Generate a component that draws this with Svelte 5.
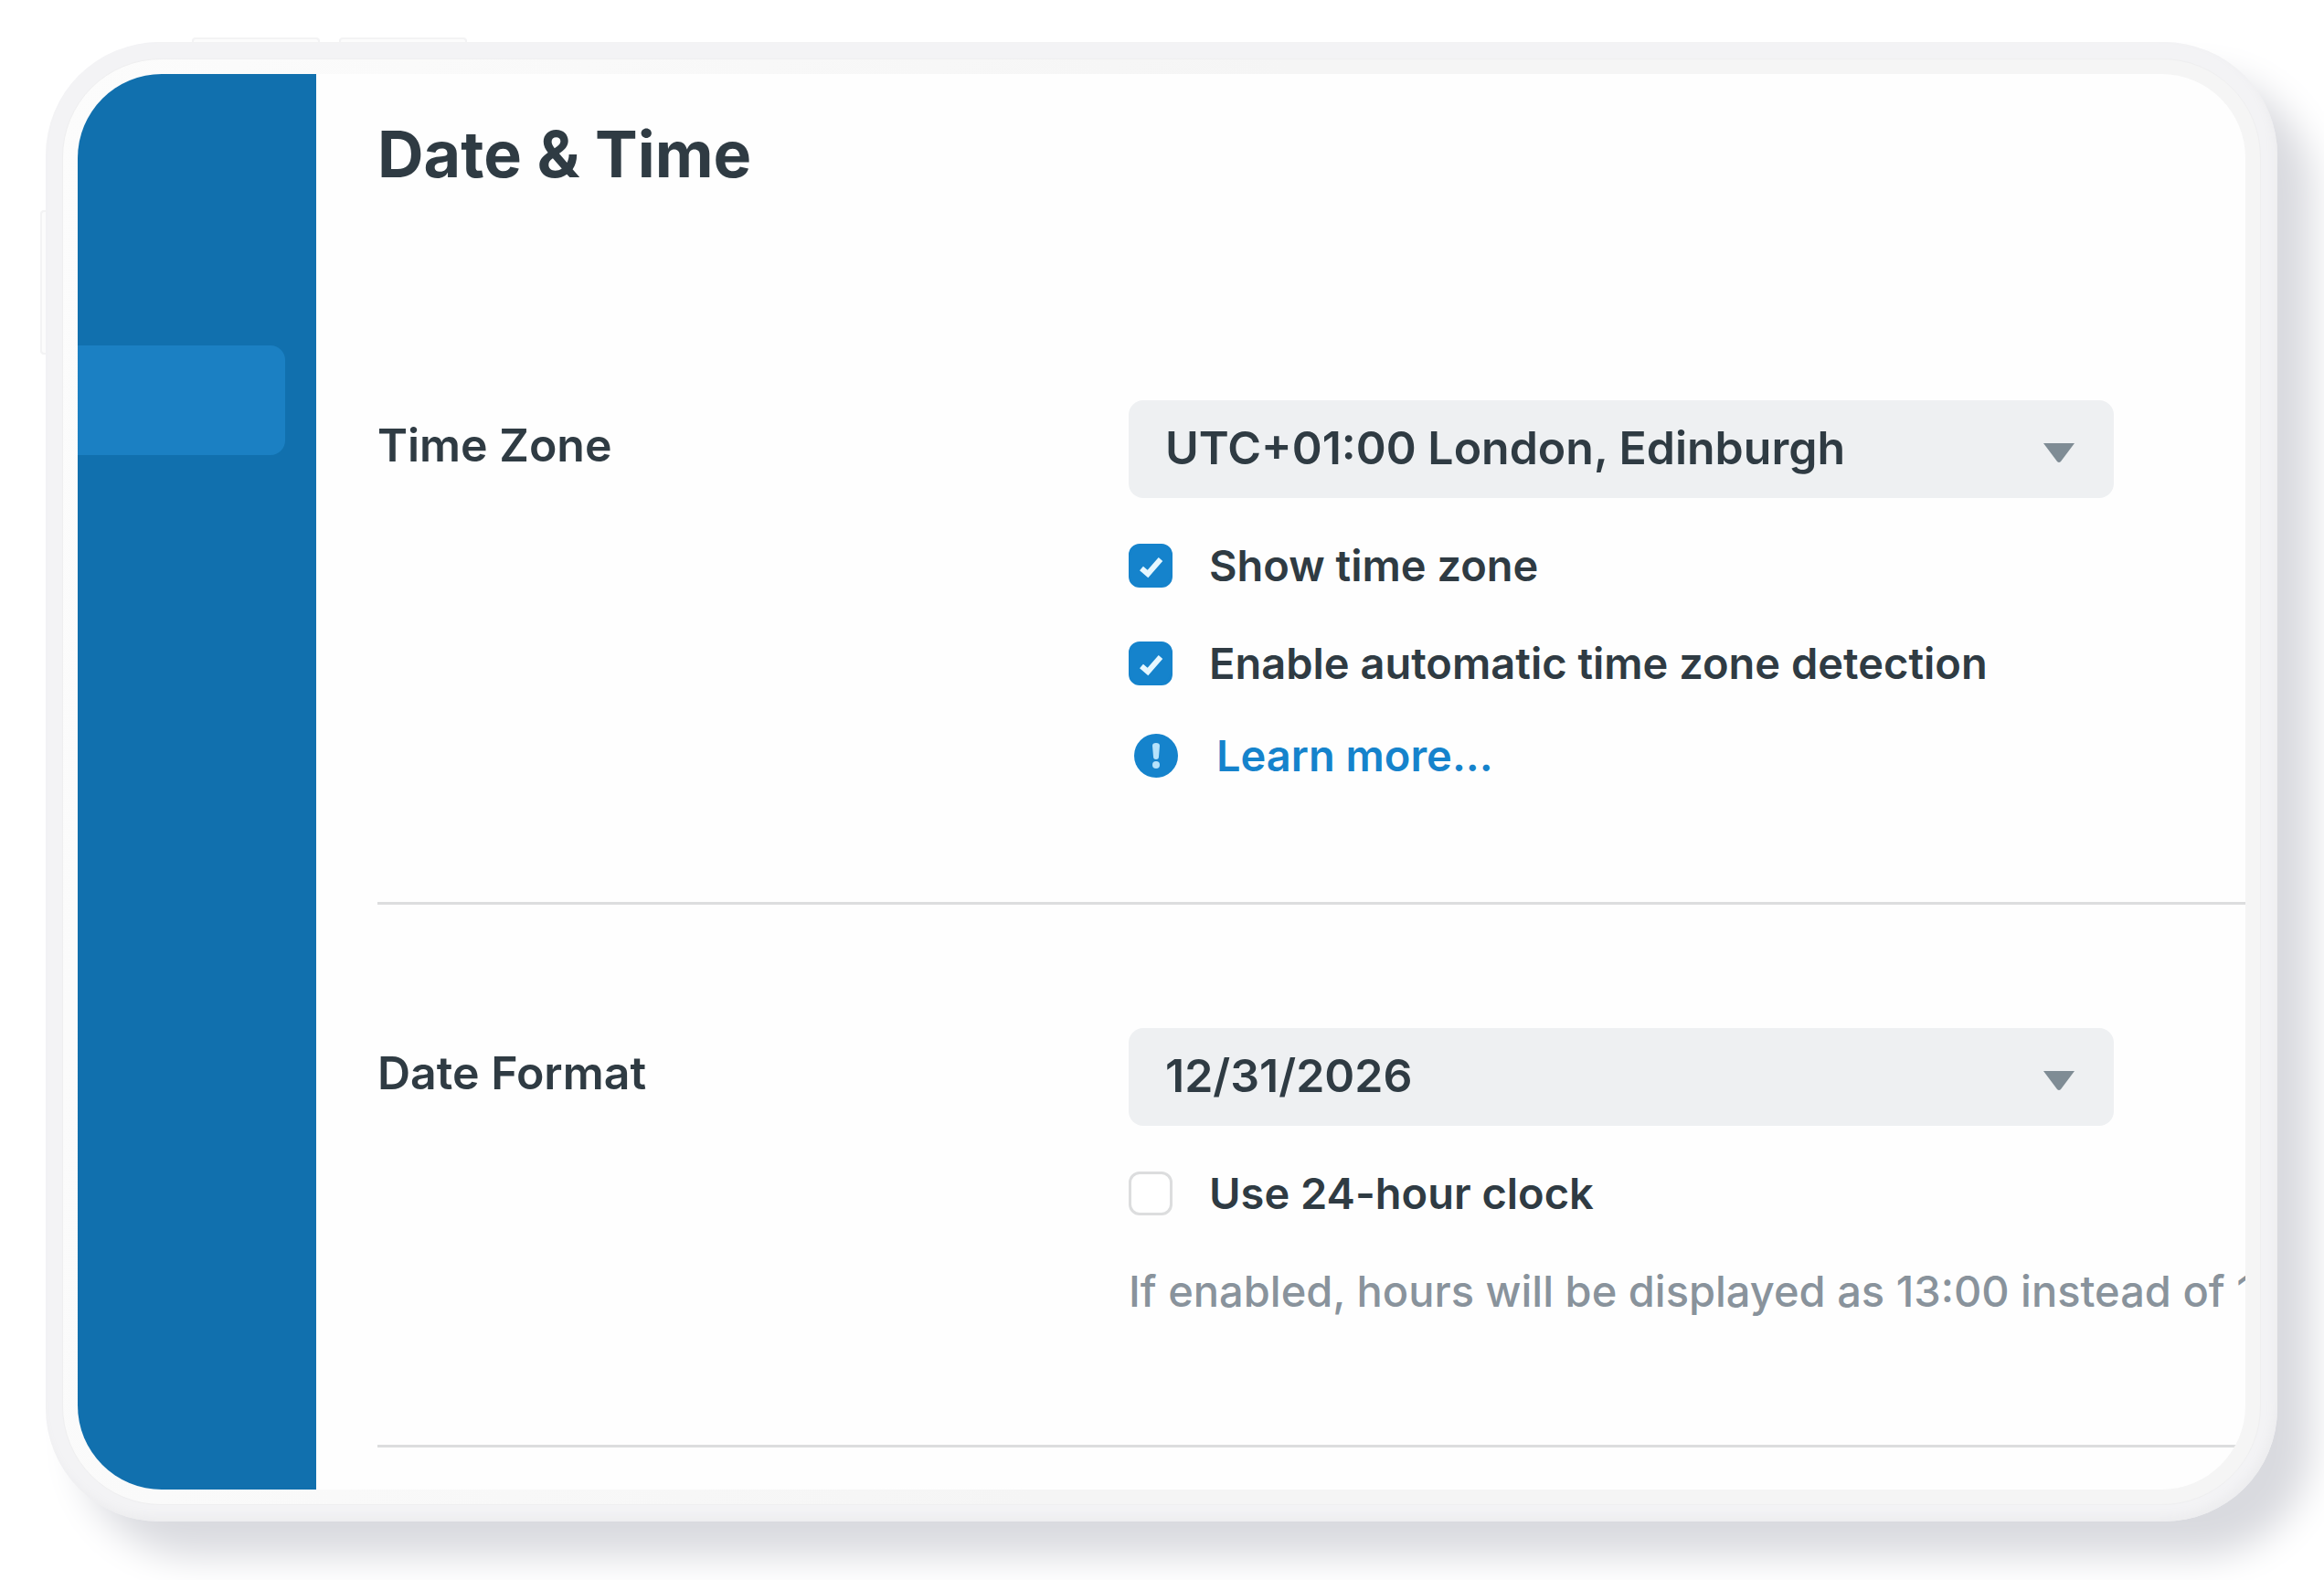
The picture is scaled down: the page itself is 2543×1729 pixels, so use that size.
<script>
  const timeZones = ["UTC+01:00 London, Edinburgh"]
  const dateFormats = ["12/31/2026"]

  let timeZone = $state(timeZones[0])
  let dateFormat = $state(dateFormats[0])
  let showTimeZone = $state(true)
  let detectTimeZone = $state(true)
  let use24Hour = $state(false)
</script>

{#snippet arrow()}
  <svg class="arrow" viewBox="0 0 36 23" aria-hidden="true">
    <path d="M1 1H35L20 21Q18 23 16 21Z" />
  </svg>
{/snippet}

{#snippet tick()}
  <svg class="tick" viewBox="0 0 48 48" aria-hidden="true">
    <path d="M14 27L21 33L35 17" />
  </svg>
{/snippet}

<div class="page">
  <div class="device">
    <span class="key key-top"></span>
    <span class="key key-top second"></span>
    <span class="key key-side"></span>
    <div class="bezel">
      <div class="screen">
        <nav class="sidebar" aria-label="Settings">
          <div class="active"></div>
        </nav>
        <main>
          <h1>Date &amp; Time</h1>

          <section>
            <label class="name" for="time-zone">Time Zone</label>
            <div class="fields">
              <div class="select">
                <select id="time-zone" bind:value={timeZone}>
                  {#each timeZones as zone}
                    <option>{zone}</option>
                  {/each}
                </select>
                {@render arrow()}
              </div>
              <label class="option">
                <span class="box">
                  <input type="checkbox" bind:checked={showTimeZone} />
                  {@render tick()}
                </span>
                Show time zone
              </label>
              <label class="option">
                <span class="box">
                  <input type="checkbox" bind:checked={detectTimeZone} />
                  {@render tick()}
                </span>
                Enable automatic time zone detection
              </label>
              <a class="more" href="#learn-more">
                <svg class="info" viewBox="0 0 48 48" aria-hidden="true">
                  <circle cx="24" cy="24" r="24" fill="#1583cc" />
                  <path d="M20 13Q20 10 24 10Q28 10 28 13L27 25Q27 28 24 28Q21 28 21 25Z" fill="#b5e2fb" />
                  <circle cx="24" cy="34" r="4" fill="#b5e2fb" />
                </svg>
                Learn more...
              </a>
            </div>
          </section>

          <section>
            <label class="name" for="date-format">Date Format</label>
            <div class="fields">
              <div class="select">
                <select id="date-format" bind:value={dateFormat}>
                  {#each dateFormats as format}
                    <option>{format}</option>
                  {/each}
                </select>
                {@render arrow()}
              </div>
              <label class="option">
                <span class="box">
                  <input type="checkbox" bind:checked={use24Hour} />
                  {@render tick()}
                </span>
                Use 24-hour clock
              </label>
              <p class="hint">If enabled, hours will be displayed as 13:00 instead of 1:00</p>
            </div>
          </section>
        </main>
      </div>
    </div>
  </div>
</div>

<style>
  :global(body) {
    margin: 0;
    background: #fff;
  }
  .page {
    padding: 46px 51px 64px 50px;
    overflow: hidden;
    font-family: Inter, "Liberation Sans", sans-serif;
    color: #2f3b43;
  }
  .device {
    position: relative;
    padding: 18px;
    border-radius: 124px;
    background: #f3f3f5;
    box-shadow: 38px 38px 40px #d9dadf, inset -4px -6px 10px #ededef;
  }
  .key {
    position: absolute;
    box-sizing: border-box;
    border: 2px solid #f3f3f4;
    background: #fcfcfc;
  }
  .key-top {
    left: 160px;
    bottom: 100%;
    width: 140px;
    height: 5px;
    border-bottom: 0;
    border-radius: 4px 4px 0 0;
  }
  .second {
    left: 321px;
  }
  .key-side {
    top: 184px;
    right: 100%;
    width: 6px;
    height: 158px;
    border-right: 0;
    border-radius: 4px 0 0 4px;
  }
  .bezel {
    padding: 16px;
    border: 1px solid #efeff0;
    border-radius: 108px;
    background: linear-gradient(100deg, #fcfcfc, #f5f5f5 50%);
  }
  .screen {
    display: flex;
    overflow: hidden;
    border-radius: 92px;
    background: #fefefe;
  }
  .sidebar {
    flex: none;
    width: 261px;
    background: #1170ae;
  }
  .active {
    height: 120px;
    margin: 297px 34px 0 0;
    border-radius: 0 16px 16px 0;
    background: #1b80c3;
  }
  main {
    flex: 1;
    min-width: 0;
    padding: 46px 0 46px 67px;
  }
  h1 {
    margin: 0 0 92px;
    font-size: 70px;
    line-height: 84px;
    font-weight: 700;
  }
  section {
    display: grid;
    grid-template-columns: 822px 1fr;
    padding: 135px 0 132px;
    border-bottom: 3px solid #dcddde;
  }
  .name {
    font-size: 50px;
    line-height: 98px;
    font-weight: 600;
  }
  .fields {
    min-width: 0;
    font-size: 47px;
    line-height: 56px;
    font-weight: 600;
  }
  .select {
    position: relative;
    width: 1078px;
    max-width: 100%;
    margin-bottom: 46px;
  }
  select {
    display: block;
    appearance: none;
    width: 100%;
    height: 107px;
    padding: 0 100px 4px 40px;
    border: 0;
    border-radius: 16px;
    background: #eef0f2;
    color: inherit;
    font: inherit;
    font-size: 50px;
    line-height: 70px;
  }
  .arrow {
    position: absolute;
    top: 46px;
    right: 42px;
    width: 36px;
    height: 23px;
    fill: #7f8c95;
    pointer-events: none;
  }
  .option {
    display: flex;
    align-items: center;
    gap: 40px;
    margin-bottom: 51px;
  }
  .box {
    position: relative;
    flex: none;
    width: 48px;
    height: 48px;
  }
  input {
    display: block;
    appearance: none;
    box-sizing: border-box;
    width: 48px;
    height: 48px;
    margin: 0;
    border: 3px solid #dcddde;
    border-radius: 12px;
    background: #fff;
  }
  input:checked {
    border-color: #1583cc;
    background: #1583cc;
  }
  .tick {
    display: none;
    position: absolute;
    inset: 0;
    fill: none;
    stroke: #e6f7ff;
    stroke-width: 6;
    pointer-events: none;
  }
  input:checked + .tick {
    display: block;
  }
  .more {
    display: flex;
    align-items: center;
    gap: 42px;
    margin: -6px 0 0 6px;
    color: #1583cc;
    text-decoration: none;
  }
  .info {
    width: 48px;
    height: 48px;
  }
  .hint {
    margin: 0 0 8px;
    color: #89939c;
    font-weight: 500;
    white-space: nowrap;
  }
</style>
